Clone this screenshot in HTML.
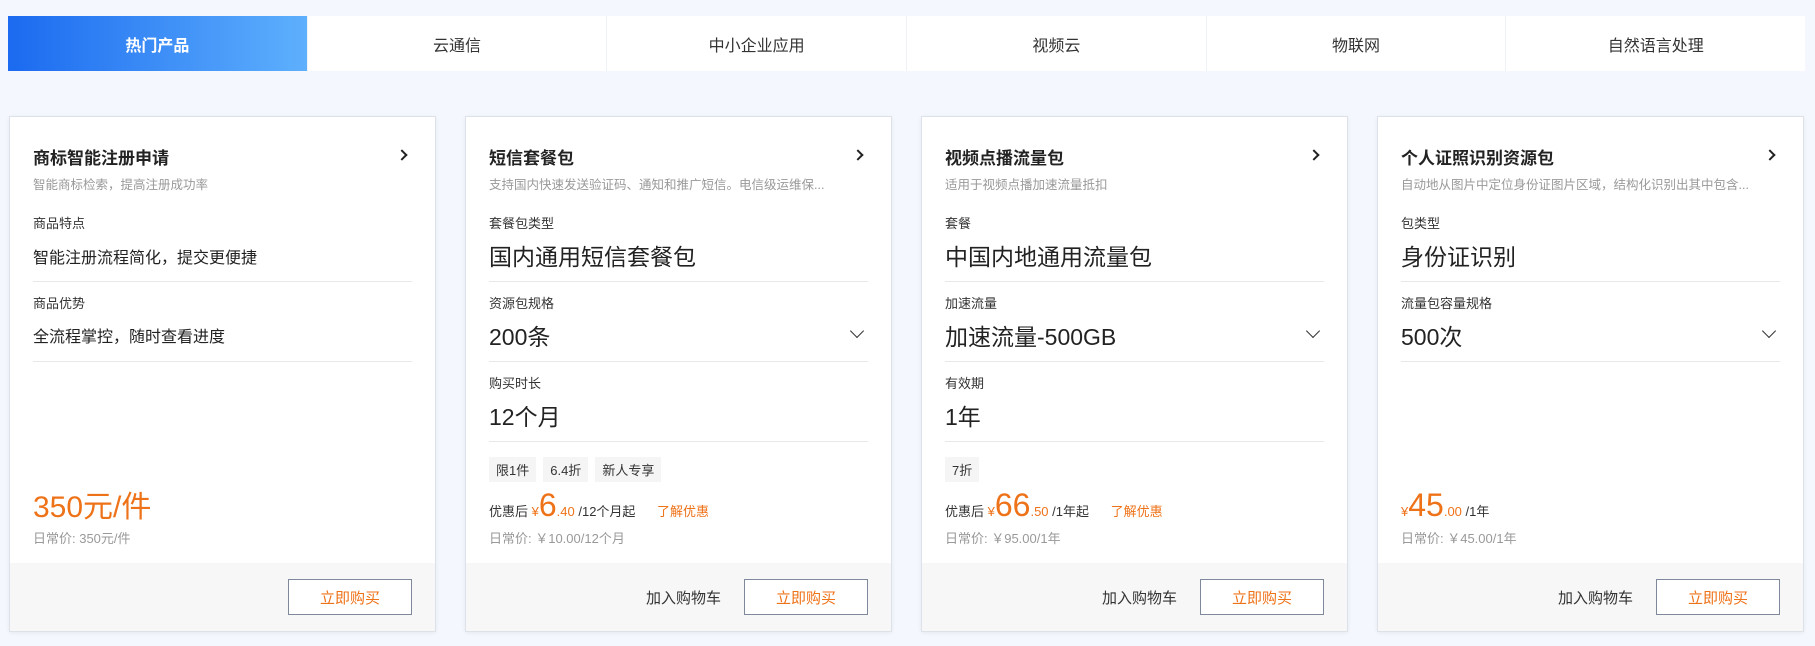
<!DOCTYPE html>
<html><head><meta charset="utf-8"><style>
*{margin:0;padding:0;box-sizing:border-box}
body{width:1815px;height:646px;background:#f4f7fd;font-family:"Liberation Sans","Noto Sans CJK SC",sans-serif;color:#333;position:relative;overflow:hidden}
.tabs{position:absolute;left:8px;top:16px;width:1797px;height:55px;display:flex;background:#fff}
.tab{flex:1;display:flex;align-items:center;justify-content:center;font-size:16px;color:#333;border-left:1px solid #eef1f6}
.tab.on{background:linear-gradient(90deg,#1b6af0,#5eb0fd);color:#fff;font-weight:bold;border:none}
.card{position:absolute;top:116px;width:427px;height:516px;background:#fff;border:1px solid #dde1e8;box-shadow:0 1px 4px rgba(0,0,0,.06)}
.in{position:absolute;left:23px;right:23px;top:0}
.t{position:absolute;top:27px;font-size:17px;font-weight:bold;color:#222}
.arr{position:absolute;right:6px;top:34px;width:8px;height:8px;border-right:2px solid #222;border-top:2px solid #222;transform:rotate(45deg)}
.s{position:absolute;top:57px;font-size:12.5px;color:#999;white-space:nowrap;overflow:hidden;width:100%}
.l{position:absolute;font-size:13px;color:#333}
.v{position:absolute;font-size:23px;color:#222;width:100%}
.v.sm{font-size:16px}
.d{position:absolute;height:1px;background:#e8e8e8;width:100%}
.chev{position:absolute;right:6px;top:8px;width:10px;height:10px;border-right:1.6px solid #333;border-bottom:1.6px solid #333;transform:rotate(45deg)}
.tags{position:absolute;top:340px;display:flex;gap:7px}
.tag{background:#f5f5f5;font-size:13px;padding:3px 7px;color:#333}
.p{position:absolute;font-size:13px;color:#333;white-space:nowrap}
.o{color:#ee7218}
.big{font-size:32px}
.r{position:absolute;font-size:13px;color:#999}
.f{position:absolute;left:0;right:0;bottom:0;height:68px;background:#f7f7f7}
.btn{position:absolute;right:23px;top:16px;width:124px;height:36px;border:1px solid #7e8a9c;display:flex;align-items:center;justify-content:center;color:#ee7218;font-size:15px;background:#fff}
.cart{position:absolute;right:170px;top:24px;font-size:15px;color:#333}
</style></head><body>
<div class="tabs"><div class="tab on">热门产品</div><div class="tab">云通信</div><div class="tab">中小企业应用</div><div class="tab">视频云</div><div class="tab">物联网</div><div class="tab">自然语言处理</div></div>

<div class="card" style="left:9px"><div class="in">
<div class="t">商标智能注册申请</div><div class="arr"></div>
<div class="s">智能商标检索，提高注册成功率</div>
<div class="l" style="top:96px">商品特点</div>
<div class="v sm" style="top:127px">智能注册流程简化，提交更便捷</div>
<div class="d" style="top:164px"></div>
<div class="l" style="top:176px">商品优势</div>
<div class="v sm" style="top:206px">全流程掌控，随时查看进度</div>
<div class="d" style="top:244px"></div>
<div class="p o" style="top:365px;font-size:30px">350元/件</div>
<div class="r" style="top:411px">日常价: 350元/件</div>
</div><div class="f"><div class="btn">立即购买</div></div></div>

<div class="card" style="left:465px"><div class="in">
<div class="t">短信套餐包</div><div class="arr"></div>
<div class="s">支持国内快速发送验证码、通知和推广短信。电信级运维保...</div>
<div class="l" style="top:96px">套餐包类型</div>
<div class="v" style="top:121px">国内通用短信套餐包</div>
<div class="d" style="top:164px"></div>
<div class="l" style="top:176px">资源包规格</div>
<div class="v" style="top:201px">200条<span class="chev"></span></div>
<div class="d" style="top:244px"></div>
<div class="l" style="top:256px">购买时长</div>
<div class="v" style="top:281px">12个月</div>
<div class="d" style="top:324px"></div>
<div class="tags"><span class="tag">限1件</span><span class="tag">6.4折</span><span class="tag">新人专享</span></div>
<div class="p" style="top:370px">优惠后 <span class="o">¥<span class="big">6</span>.40</span> /12个月起 <span class="o" style="margin-left:18px">了解优惠</span></div>
<div class="r" style="top:411px">日常价: ￥10.00/12个月</div>
</div><div class="f"><span class="cart">加入购物车</span><div class="btn">立即购买</div></div></div>

<div class="card" style="left:921px"><div class="in">
<div class="t">视频点播流量包</div><div class="arr"></div>
<div class="s">适用于视频点播加速流量抵扣</div>
<div class="l" style="top:96px">套餐</div>
<div class="v" style="top:121px">中国内地通用流量包</div>
<div class="d" style="top:164px"></div>
<div class="l" style="top:176px">加速流量</div>
<div class="v" style="top:201px">加速流量-500GB<span class="chev"></span></div>
<div class="d" style="top:244px"></div>
<div class="l" style="top:256px">有效期</div>
<div class="v" style="top:281px">1年</div>
<div class="d" style="top:324px"></div>
<div class="tags"><span class="tag">7折</span></div>
<div class="p" style="top:370px">优惠后 <span class="o">¥<span class="big">66</span>.50</span> /1年起 <span class="o" style="margin-left:18px">了解优惠</span></div>
<div class="r" style="top:411px">日常价: ￥95.00/1年</div>
</div><div class="f"><span class="cart">加入购物车</span><div class="btn">立即购买</div></div></div>

<div class="card" style="left:1377px"><div class="in">
<div class="t">个人证照识别资源包</div><div class="arr"></div>
<div class="s">自动地从图片中定位身份证图片区域，结构化识别出其中包含...</div>
<div class="l" style="top:96px">包类型</div>
<div class="v" style="top:121px">身份证识别</div>
<div class="d" style="top:164px"></div>
<div class="l" style="top:176px">流量包容量规格</div>
<div class="v" style="top:201px">500次<span class="chev"></span></div>
<div class="d" style="top:244px"></div>
<div class="p" style="top:370px"><span class="o">¥<span class="big">45</span>.00</span> /1年</div>
<div class="r" style="top:411px">日常价: ￥45.00/1年</div>
</div><div class="f"><span class="cart">加入购物车</span><div class="btn">立即购买</div></div></div>
</body></html>
